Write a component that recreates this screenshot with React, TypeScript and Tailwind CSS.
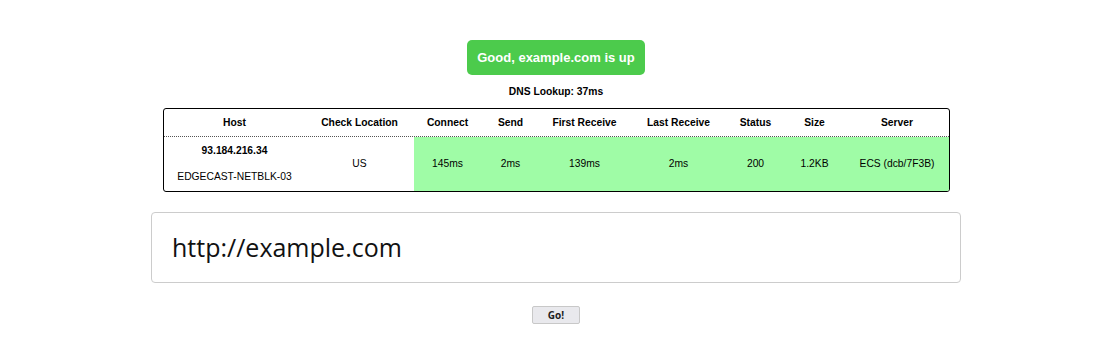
const cols = [
  { name: "Host", w: "w-[142px]" },
  { name: "Check Location", w: "w-[108px]" },
  { name: "Connect", w: "w-[68px]" },
  { name: "Send", w: "w-[58px]" },
  { name: "First Receive", w: "w-[90px]" },
  { name: "Last Receive", w: "w-[98px]" },
  { name: "Status", w: "w-[56px]" },
  { name: "Size", w: "w-[62px]" },
  { name: "Server", w: "" },
];

const timings = ["145ms", "2ms", "139ms", "2ms", "200", "1.2KB", "ECS (dcb/7F3B)"];

export default function App() {
  return (
    <div className="min-h-screen bg-white pl-[15px] font-['Liberation_Sans',Arial,sans-serif] text-black">
      <div className="flex flex-col items-center pt-[40px]">
        <div className="flex h-[35px] items-center rounded-[5px] bg-[#4ccb4c] px-[10px] text-[13px] font-bold text-white">
          Good, example.com is up
        </div>
        <div className="mt-[10px] text-[10.3px] font-bold leading-[13px]">DNS Lookup: 37ms</div>

        <div className="mt-[10px] w-[787px] overflow-hidden rounded-[3px] border border-black text-[10.3px]">
          <div className="flex h-[28px] items-center border-b border-dotted border-[#555] font-bold">
            {cols.map((c) => (
              <div key={c.name} className={`${c.w} ${c.w ? "" : "flex-1"} text-center`}>
                {c.name}
              </div>
            ))}
          </div>
          <div className="flex h-[54px] items-stretch">
            <div className="flex w-[142px] flex-col items-center justify-center gap-[13px] pb-[2px] leading-[13px]">
              <div className="font-bold">93.184.216.34</div>
              <div>EDGECAST-NETBLK-03</div>
            </div>
            <div className="flex w-[108px] items-center justify-center">US</div>
            <div className="flex flex-1 items-center bg-[#9ffca6]">
              {timings.map((t, i) => (
                <div key={i} className={`${cols[i + 2].w} ${cols[i + 2].w ? "" : "flex-1"} text-center`}>
                  {t}
                </div>
              ))}
            </div>
          </div>
        </div>

        <div className="mt-[20px] flex h-[71px] w-[810px] items-center rounded-[4px] border border-[#cccccc] px-[20px] font-['Open_Sans',sans-serif] text-[25px] text-[#111]">
          http://example.com
        </div>

        <button className="mt-[23px] h-[18px] w-[48px] rounded-[2px] border border-[#c8c8c8] bg-[#e9e9ed] font-['Open_Sans',sans-serif] text-[10px] font-bold leading-none text-[#222]">
          Go!
        </button>
      </div>
    </div>
  );
}
